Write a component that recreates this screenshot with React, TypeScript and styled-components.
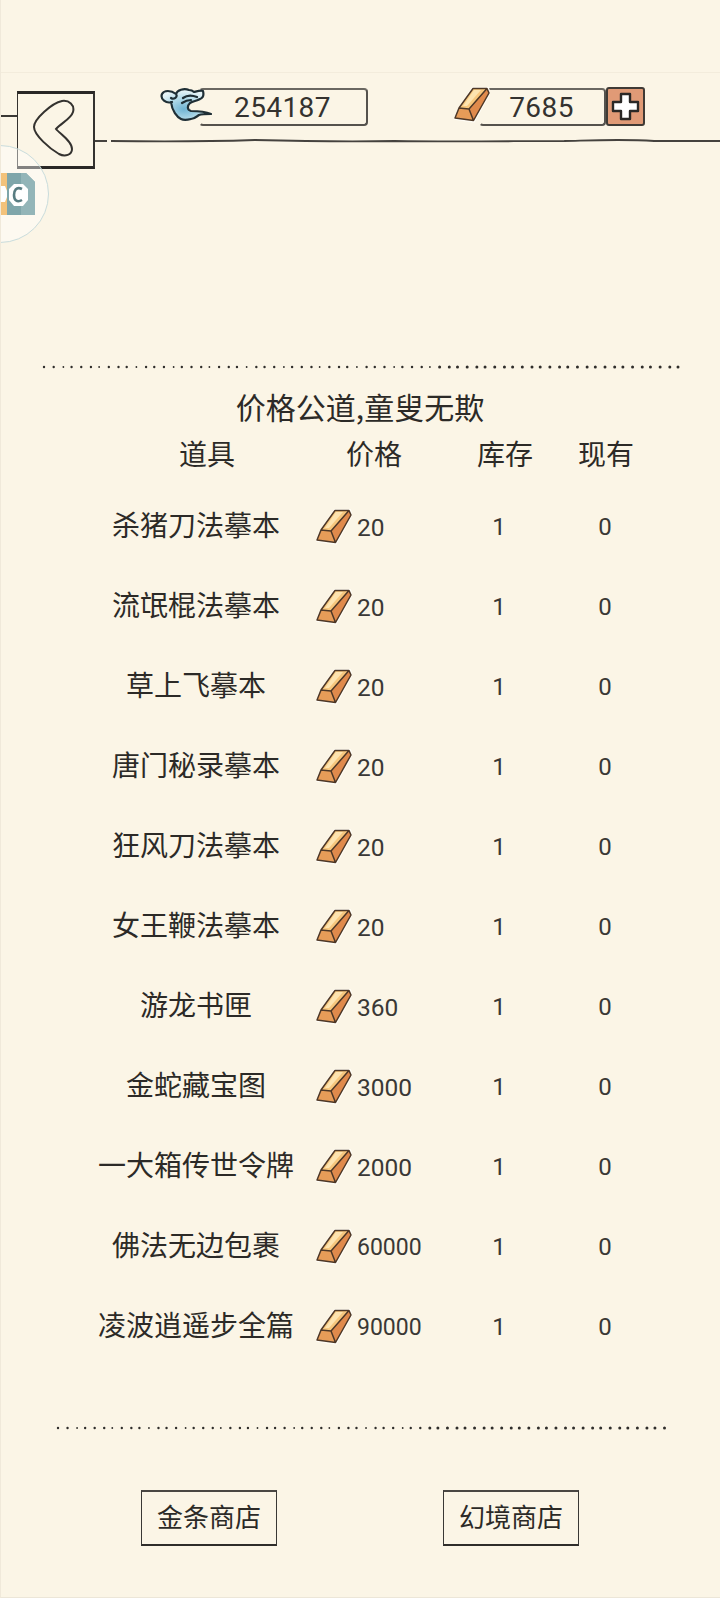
import React from "react";
import styled, { createGlobalStyle } from "styled-components";

const GlobalStyle = createGlobalStyle`
  html, body {
    margin: 0;
    padding: 0;
    background: #fbf5e6;
  }
  * {
    box-sizing: border-box;
  }
`;

const CJK = `"Noto Sans CJK SC", "Noto Sans", sans-serif`;
const INK = "#2c2a27";

const Page = styled.div`
  position: relative;
  width: 720px;
  height: 1598px;
  overflow: hidden;
  background: #fbf5e6;
  color: ${INK};
  font-family: ${CJK};
  border-left: 1px solid #f0e9da;
  border-bottom: 1px solid #ece6d8;
`;

const StatusStrip = styled.div`
  height: 73px;
  border-bottom: 1px solid #f3ecdc;
`;

/* top bar */
const TopBar = styled.header`
  display: flex;
  align-items: flex-start;
  padding-top: 14px;
`;

const Stub = styled.div`
  width: 16px;
  height: 2px;
  margin-top: 28px;
  background: #3a3835;
`;

const BackButton = styled.button`
  display: flex;
  align-items: center;
  justify-content: center;
  width: 78px;
  height: 78px;
  margin-top: 4px;
  padding: 0 4px 5px 0;
  background: transparent;
  border: 1px solid #34322f;
  border-top: 3px solid #2a2826;
  border-right: 2px solid #34322f;
  border-bottom: 3px solid #2a2826;
`;

const TopRight = styled.div`
  flex: 1;
  display: flex;
  flex-direction: column;
`;

const CurrencyRow = styled.div`
  display: flex;
  align-items: flex-start;
  height: 39px;
  padding-left: 65px;
`;

const CloudIcon = styled.svg`
  width: 52px;
  height: 36px;
  flex: none;
  margin-right: -13px;
  position: relative;
  z-index: 1;
`;

interface CounterProps {
  width: number;
}
const Counter = styled.div<CounterProps>`
  display: flex;
  align-items: center;
  justify-content: center;
  width: ${props => props.width}px;
  height: 38px;
  margin-top: 1px;
  padding-right: 2px;
  font-family: Roboto, sans-serif;
  font-size: 28px;
  letter-spacing: 0.4px;
  color: #34322f;
  border: 2px solid #55524d;
  border-top-color: #6a6761;
  border-left-color: transparent;
  border-radius: 4px;
`;

const GoldGroup = styled.div`
  display: flex;
  align-items: flex-start;
  margin-left: 86px;
`;

const TopIngot = styled.svg`
  width: 36px;
  height: 36px;
  flex: none;
  margin-right: -11px;
  position: relative;
  z-index: 1;
`;

const PlusButton = styled.button`
  display: flex;
  align-items: center;
  justify-content: center;
  width: 39px;
  height: 39px;
  padding: 0;
  background: #e09a76;
  border: 2px solid #3f3a35;
  border-radius: 3px;
`;

const SketchLine = styled.svg`
  display: block;
  width: 100%;
  height: 6px;
  margin-top: 12px;
`;

/* little floating helper ball on the left edge */
const FloatBall = styled.div`
  position: absolute;
  left: -50px;
  top: 145px;
  width: 98px;
  height: 98px;
  border-radius: 50%;
  background: rgba(255, 255, 255, 0.42);
  border: 1.5px solid #c9dcdc;
  display: flex;
  align-items: center;
  justify-content: flex-end;
`;

const BallLogo = styled.svg`
  width: 36px;
  height: 42px;
  margin-right: 13px;
`;

/* dots */
const DotStrip = styled.svg<{ $left: number; $top: number }>`
  display: block;
  margin-left: ${props => props.$left}px;
  margin-top: ${props => props.$top}px;
  height: 4px;
`;

const Main = styled.main`
  padding-top: 196px;
`;

const Title = styled.h1`
  margin: 17px 0 0;
  padding-right: 1px;
  font-size: 30px;
  font-weight: 400;
  line-height: 40px;
  text-align: center;
`;

const HeaderRow = styled.div`
  display: grid;
  grid-template-columns: 216px 118px 144px 58px;
  margin-top: 7px;
  padding-left: 98px;
`;

const HeaderCell = styled.div`
  font-size: 28px;
  line-height: 40px;
  text-align: center;
`;

const ItemList = styled.div`
  margin-top: 14px;
`;

const ItemRow = styled.div`
  display: grid;
  grid-template-columns: 196px 151px 108px 104px;
  align-items: center;
  height: 80px;
  padding-left: 97px;
`;

const ItemName = styled.div`
  padding-bottom: 6px;
  font-size: 28px;
  white-space: nowrap;
  text-align: center;
`;

const PriceCell = styled.div`
  display: flex;
  align-items: center;
  padding-left: 22px;
`;

const RowIngot = styled.svg`
  width: 36px;
  height: 36px;
  flex: none;
  margin-right: 5px;
`;

const Digits = styled.div`
  font-family: Roboto, sans-serif;
  font-size: 24px;
  color: #3a3835;
  text-align: center;
`;

const PriceDigits = styled(Digits)<{ $small?: boolean }>`
  font-size: ${props => (props.$small ? 23 : 24.5)}px;
`;

const Footer = styled.footer`
  display: flex;
  gap: 166px;
  margin-top: 60px;
  padding-left: 140px;
`;

const ShopButton = styled.button`
  width: 136px;
  height: 56px;
  padding: 0 0 6px;
  background: transparent;
  color: ${INK};
  font-family: ${CJK};
  font-size: 26px;
  border: 1.5px solid #3a3835;
  border-top: 2px solid #4a4743;
  border-bottom: 2.5px solid #2f2d2a;
`;

const Ingot = () => (
  <>
    <path d="M19 0 L34 0 L36 6 L20 35 L0 32 L5 21 Z" fill="#fffdf6" stroke="#fffdf6" strokeWidth="1.5" />
    <path d="M19 1.5 L33 1.5 L32 5 L15 22 L5 21 Z" fill="#f8c87e" />
    <path d="M20 3 L27 3 L13 19 L9 19 Z" fill="#fde4b0" />
    <path d="M33 1.5 L35 6 L19.5 33.5 L15 22 Z" fill="#e08a4c" />
    <path d="M5 21 L15 22 L19.5 33.5 L1 31 Z" fill="#e79c58" />
    <path
      d="M19 1.5 L33 1.5 L35 6 L19.5 33.5 L1 31 L5 21 Z M5 21 L15 22 L33 1.5 M15 22 L19.5 33.5"
      fill="none"
      stroke="#4e3827"
      strokeWidth="1.5"
      strokeLinejoin="round"
    />
  </>
);

const dotsFor = (count: number, step: number) =>
  Array.from({ length: count }, (_, i) => ({
    x: 2 + i * step + ((i * 7) % 3) * 0.5,
    r: i > count * 0.6 ? 1.5 : i % 4 === 2 ? 0.9 : 1.2,
  }));

const DotRule = ({ left, top, width, count }: { left: number; top: number; width: number; count: number }) => (
  <DotStrip $left={left} $top={top} width={width} height={4} viewBox={`0 0 ${width} 4`}>
    {dotsFor(count, (width - 4) / (count - 1)).map((d, i) => (
      <circle key={i} cx={d.x} cy={2} r={d.r} fill="#2f2d2a" />
    ))}
  </DotStrip>
);

const items = [
  { name: "杀猪刀法摹本", price: "20" },
  { name: "流氓棍法摹本", price: "20" },
  { name: "草上飞摹本", price: "20" },
  { name: "唐门秘录摹本", price: "20" },
  { name: "狂风刀法摹本", price: "20" },
  { name: "女王鞭法摹本", price: "20" },
  { name: "游龙书匣", price: "360" },
  { name: "金蛇藏宝图", price: "3000" },
  { name: "一大箱传世令牌", price: "2000" },
  { name: "佛法无边包裹", price: "60000" },
  { name: "凌波逍遥步全篇", price: "90000" },
];

export default function App() {
  return (
    <Page>
      <GlobalStyle />
      <StatusStrip />
      <TopBar>
        <Stub />
        <BackButton aria-label="back">
          <svg width="44" height="58" viewBox="0 0 44 58">
            <path
              d="M30 2 C37 1 43 6 41 13 C39 20 29 24 24 30 C28 35 40 42 40 50 C40 56 33 58 27 55 C18 50 2 36 2 28 C2 20 20 4 30 2 Z"
              fill="none"
              stroke="#34322f"
              strokeWidth="2"
            />
          </svg>
        </BackButton>
        <TopRight>
          <CurrencyRow>
            <CloudIcon viewBox="0 0 52 36">
              <defs>
                <radialGradient id="cloudFill" cx="0.45" cy="0.65" r="0.6">
                  <stop offset="0" stopColor="#6fb3d2" />
                  <stop offset="0.6" stopColor="#b5dcea" />
                  <stop offset="1" stopColor="#e6f4f7" />
                </radialGradient>
              </defs>
              <path
                d="M11 15 C4 15 0 11 2 7 C4 3 11 3 16 7 C17 3 24 1 29 3 C32 3 33 4 34 5 C38 4 41 3 43 4 C44 8 43 11 40 12 C37 14 33 14 30 16 C27 19 27 23 31 24 C36 24 44 24 51 27 C46 27 42 27 39 28 C36 30 34 32 31 32 C27 33 23 33 21 32 C17 30 12 24 11 15 Z"
                fill="url(#cloudFill)"
              />
              <path
                d="M12 15 C6 17 0 12 2 7 C4 3 11 3 16 7 C18 10 14 13 11 11 M16 7 C17 3 24 1 29 3 C32 3 33 4 34 5 C38 4 41 3 43 4 M43 4 C44 8 43 11 40 12 C37 14 33 14 30 16 C27 19 27 23 31 24 C36 24 44 24 51 27 C46 27 42 27 39 28 C36 30 34 32 31 32 C27 33 23 33 21 32 C17 30 12 24 11 15 M23 11 C27 8 32 8 37 10 M22 16 C25 14 28 13 31 13"
                fill="none"
                stroke="#1f2f36"
                strokeWidth="2.2"
                strokeLinecap="round"
                strokeLinejoin="round"
              />
            </CloudIcon>
            <Counter width={169}>254187</Counter>
            <GoldGroup>
              <TopIngot viewBox="0 0 36 36">
                <Ingot />
              </TopIngot>
              <Counter width={127}>7685</Counter>
              <PlusButton aria-label="add">
                <svg width="31" height="31" viewBox="0 0 31 31">
                  <path
                    d="M11 3 H20 V11 H28 V20 H20 V28 H11 V20 H3 V11 H11 Z"
                    fill="#fff"
                    stroke="#2a2826"
                    strokeWidth="2.4"
                    strokeLinejoin="round"
                  />
                </svg>
              </PlusButton>
            </GoldGroup>
          </CurrencyRow>
          <SketchLine viewBox="0 0 626 6" preserveAspectRatio="none">
            <path
              d="M0 3 H12 M16 3 C80 4 130 3 160 2 C200 3 240 4 300 3 C360 4 420 3 470 3 C510 2 530 1 560 3 C590 3 610 3 626 3"
              fill="none"
              stroke="#45423e"
              strokeWidth="1.8"
            />
          </SketchLine>
        </TopRight>
      </TopBar>

      <FloatBall>
        <BallLogo viewBox="0 0 36 42">
          <rect x="0" y="0" width="8" height="42" fill="#f3c27a" />
          <path d="M0 13 H6 L8 18 V24 L6 29 H0 Z" fill="#fff" />
          <path d="M8 0 H27 L36 9 V42 H8 Z" fill="#7fa6aa" />
          <path d="M22 0 H27 L36 9 V42 H22 Z" fill="#93b5b8" />
          <path d="M15 11 H24 L29 16 V27 L24 33 H15 L10 27 V16 Z" fill="#fff" />
          <path
            d="M23 16 C17 13 15 18 15 22 C15 27 18 30 23 27"
            fill="none"
            stroke="#587c81"
            strokeWidth="2.6"
          />
        </BallLogo>
      </FloatBall>

      <Main>
        <DotRule left={41} top={0} width={638} count={70} />
        <Title>价格公道,童叟无欺</Title>
        <HeaderRow>
          <HeaderCell>道具</HeaderCell>
          <HeaderCell>价格</HeaderCell>
          <HeaderCell>库存</HeaderCell>
          <HeaderCell>现有</HeaderCell>
        </HeaderRow>
        <ItemList>
          {items.map(item => (
            <ItemRow key={item.name}>
              <ItemName>{item.name}</ItemName>
              <PriceCell>
                <RowIngot viewBox="0 0 36 36">
                  <Ingot />
                </RowIngot>
                <PriceDigits $small={item.price.length > 4}>{item.price}</PriceDigits>
              </PriceCell>
              <Digits>1</Digits>
              <Digits>0</Digits>
            </ItemRow>
          ))}
        </ItemList>
        <DotRule left={55} top={59} width={610} count={68} />
        <Footer>
          <ShopButton>金条商店</ShopButton>
          <ShopButton>幻境商店</ShopButton>
        </Footer>
      </Main>
    </Page>
  );
}
